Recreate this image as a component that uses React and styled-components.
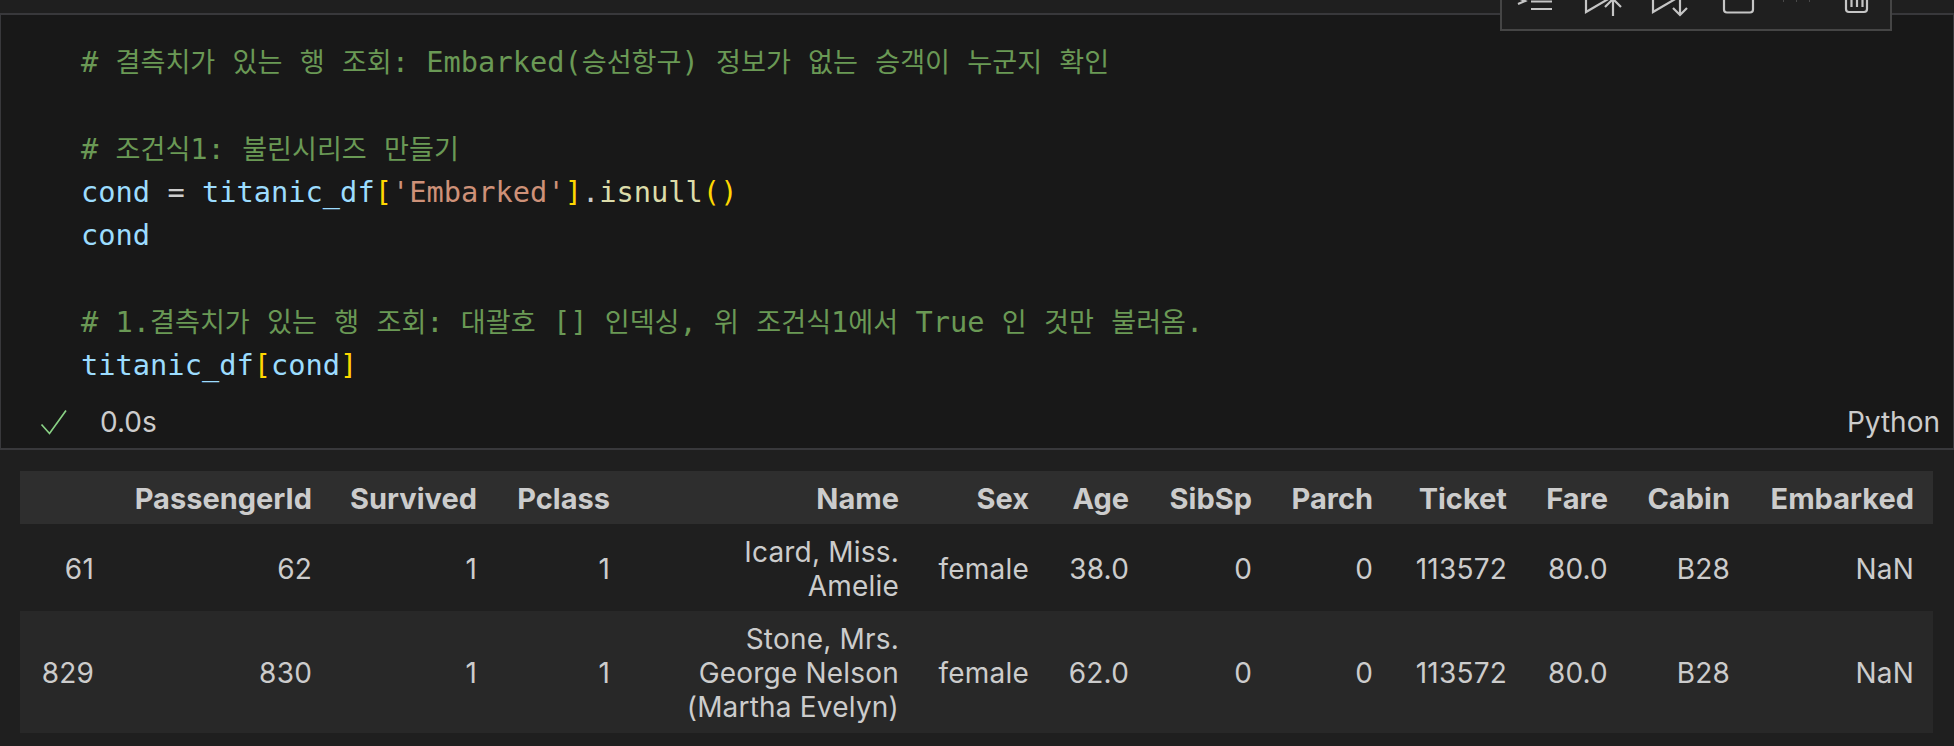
import React from 'react';
import styled, { createGlobalStyle } from 'styled-components';

const GlobalStyle = createGlobalStyle`
  html, body {
    margin: 0;
    height: 746px;
    overflow: hidden;
    background: #1f1f1f;
  }
`;

const COLUMNS = [
  ['', 93],
  ['PassengerId', 218],
  ['Survived', 165],
  ['Pclass', 133],
  ['Name', 289],
  ['Sex', 130],
  ['Age', 100],
  ['SibSp', 123],
  ['Parch', 121],
  ['Ticket', 134],
  ['Fare', 101],
  ['Cabin', 122],
  ['Embarked', 184],
];

const ROWS = [
  { height: 87, cells: ['61', '62', '1', '1', ['Icard, Miss.', 'Amelie'], 'female', '38.0', '0', '0', '113572', '80.0', 'B28', 'NaN'] },
  { height: 122, cells: ['829', '830', '1', '1', ['Stone, Mrs.', 'George Nelson', '(Martha Evelyn)'], 'female', '62.0', '0', '0', '113572', '80.0', 'B28', 'NaN'] },
];

const Mixed = ({ text }) =>
  text.split(/([가-힣]+)/).map((part, i) => (i % 2 ? <Hangul key={i}>{part}</Hangul> : part));

const App = () => {
  return (
    <Page>
      <GlobalStyle />
      <Toolbar>
        <ToolIcon width="67" height="51" viewBox="0 0 67 51">
          <path d="M16 18l7 3-7 3" />
          <path d="M29 21.500h21M29 29h21" />
        </ToolIcon>
        <ToolIcon width="68" height="51" viewBox="0 0 68 51">
          <path d="M17 8v24l24-14" />
          <path d="M44 36V21M36 27l8-8 8 8" />
        </ToolIcon>
        <ToolIcon width="67" height="51" viewBox="0 0 67 51">
          <path d="M16 8v24l24-14" />
          <path d="M43 16v19M36 28l7 7 7-7" />
        </ToolIcon>
        <ToolIcon width="68" height="51" viewBox="0 0 68 51">
          <rect x="20" y="4" width="29" height="28.500" rx="3" />
        </ToolIcon>
        <ToolIcon width="54" height="51" viewBox="0 0 54 51">
          <path d="M11 21h1M24 21h1M37 21h1" opacity="0.25" />
        </ToolIcon>
        <ToolIcon width="60" height="51" viewBox="0 0 60 51">
          <path d="M20 10v19a3 3 0 0 0 3 3h15a3 3 0 0 0 3-3V10" />
          <path d="M25.500 14v13M31 14v13M36.500 14v13" />
        </ToolIcon>
      </Toolbar>
      <Cell>
        <Editor>
          <Line><Comment><Mixed text="# 결측치가 있는 행 조회: Embarked(승선항구) 정보가 없는 승객이 누군지 확인" /></Comment></Line>
          <Line />
          <Line><Comment><Mixed text="# 조건식1: 불린시리즈 만들기" /></Comment></Line>
          <Line>
            <Var>cond</Var> <Plain>=</Plain> <Var>titanic_df</Var><Bracket>[</Bracket><Str>'Embarked'</Str><Bracket>]</Bracket><Plain>.</Plain><Func>isnull</Func><Bracket>()</Bracket>
          </Line>
          <Line><Var>cond</Var></Line>
          <Line />
          <Line><Comment><Mixed text="# 1.결측치가 있는 행 조회: 대괄호 [] 인덱싱, 위 조건식1에서 True 인 것만 불러옴." /></Comment></Line>
          <Line>
            <Var>titanic_df</Var><Bracket>[</Bracket><Var>cond</Var><Bracket>]</Bracket>
          </Line>
        </Editor>
        <Status>
          <svg width="28" height="26" viewBox="0 0 28 26" fill="none" stroke="#89d185" strokeWidth="1.700">
            <path d="M1.500 15.500l8 9L26 1.500" />
          </svg>
          <Duration>0.0s</Duration>
          <Language>Python</Language>
        </Status>
      </Cell>
      <Output>
        <Table>
          <colgroup>
            {COLUMNS.map(([name, width], i) => (
              <Col key={i} $w={width} />
            ))}
          </colgroup>
          <thead>
            <tr>
              {COLUMNS.map(([name], i) => (
                <HeadCell key={i}>{name}</HeadCell>
              ))}
            </tr>
          </thead>
          <tbody>
            {ROWS.map((row, r) => (
              <Row key={r} $odd={r % 2 === 1} $h={row.height}>
                {row.cells.map((value, c) => (
                  <DataCell key={c}>
                    {Array.isArray(value)
                      ? value.map((part) => <NamePart key={part}>{part}</NamePart>)
                      : value}
                  </DataCell>
                ))}
              </Row>
            ))}
          </tbody>
        </Table>
      </Output>
    </Page>
  );
};

const Page = styled.div`
  position: relative;
  height: 746px;
  padding-top: 13px;
  box-sizing: border-box;
  overflow: hidden;
  background: #1f1f1f;
`;

const Toolbar = styled.div`
  position: absolute;
  top: -22px;
  left: 1500px;
  width: 392px;
  height: 53px;
  box-sizing: border-box;
  display: flex;
  background: #1f1f1f;
  border: 2px solid #454545;
  z-index: 2;
`;

const ToolIcon = styled.svg`
  flex: none;
  fill: none;
  stroke: #c5c5c5;
  stroke-width: 2.200;
`;

const Cell = styled.div`
  box-sizing: border-box;
  height: 437px;
  background: #181818;
  border: 1px solid #38383b;
  border-top-width: 2px;
  border-bottom-width: 2px;
`;

const Editor = styled.div`
  padding: 26px 0 0 80px;
  font-family: 'DejaVu Sans Mono', 'Noto Sans CJK KR', monospace;
  font-size: 28.700px;
  line-height: 43.350px;
  color: #d4d4d4;
`;

const Line = styled.div`
  height: 43.350px;
  white-space: pre;
`;

const Hangul = styled.span`
  font-family: 'Noto Sans CJK KR', sans-serif;
  font-size: 27.100px;
  line-height: 0;
`;

const Comment = styled.span`
  color: #6a9955;
`;
const Var = styled.span`
  color: #9cdcfe;
`;
const Str = styled.span`
  color: #ce9178;
`;
const Func = styled.span`
  color: #dcdcaa;
`;
const Bracket = styled.span`
  color: #ffd700;
`;
const Plain = styled.span`
  color: #cccccc;
`;

const Status = styled.div`
  display: flex;
  align-items: center;
  height: 60px;
  padding: 9px 13px 0 39px;
  box-sizing: border-box;
  font-family: Inter, 'Liberation Sans', sans-serif;
  font-size: 28px;
  color: #cccccc;
`;

const Duration = styled.span`
  margin-left: 32px;
`;

const Language = styled.span`
  margin-left: auto;
`;

const Output = styled.div`
  padding: 21px 21px 0 20px;
`;

const Table = styled.table`
  width: 1913px;
  table-layout: fixed;
  border-collapse: collapse;
  font-family: Inter, 'Liberation Sans', sans-serif;
  font-size: 28px;
  letter-spacing: 0.200px;
  line-height: 34px;
  color: #cccccc;
`;

const Col = styled.col`
  width: ${(props) => props.$w}px;
`;

const HeadCell = styled.th`
  height: 53px;
  padding: 2px 19px 0 0;
  box-sizing: border-box;
  text-align: right;
  font-size: 29px;
  font-weight: 700;
  letter-spacing: 0;
  background: #2e2e2e;
`;

const Row = styled.tr`
  height: ${(props) => props.$h}px;
  background: ${(props) => (props.$odd ? '#282828' : '#1f1f1f')};
`;

const DataCell = styled.td`
  padding: 2px 19px 0 0;
  text-align: right;
  vertical-align: middle;
  white-space: nowrap;
`;

const NamePart = styled.div``;

export default App;
